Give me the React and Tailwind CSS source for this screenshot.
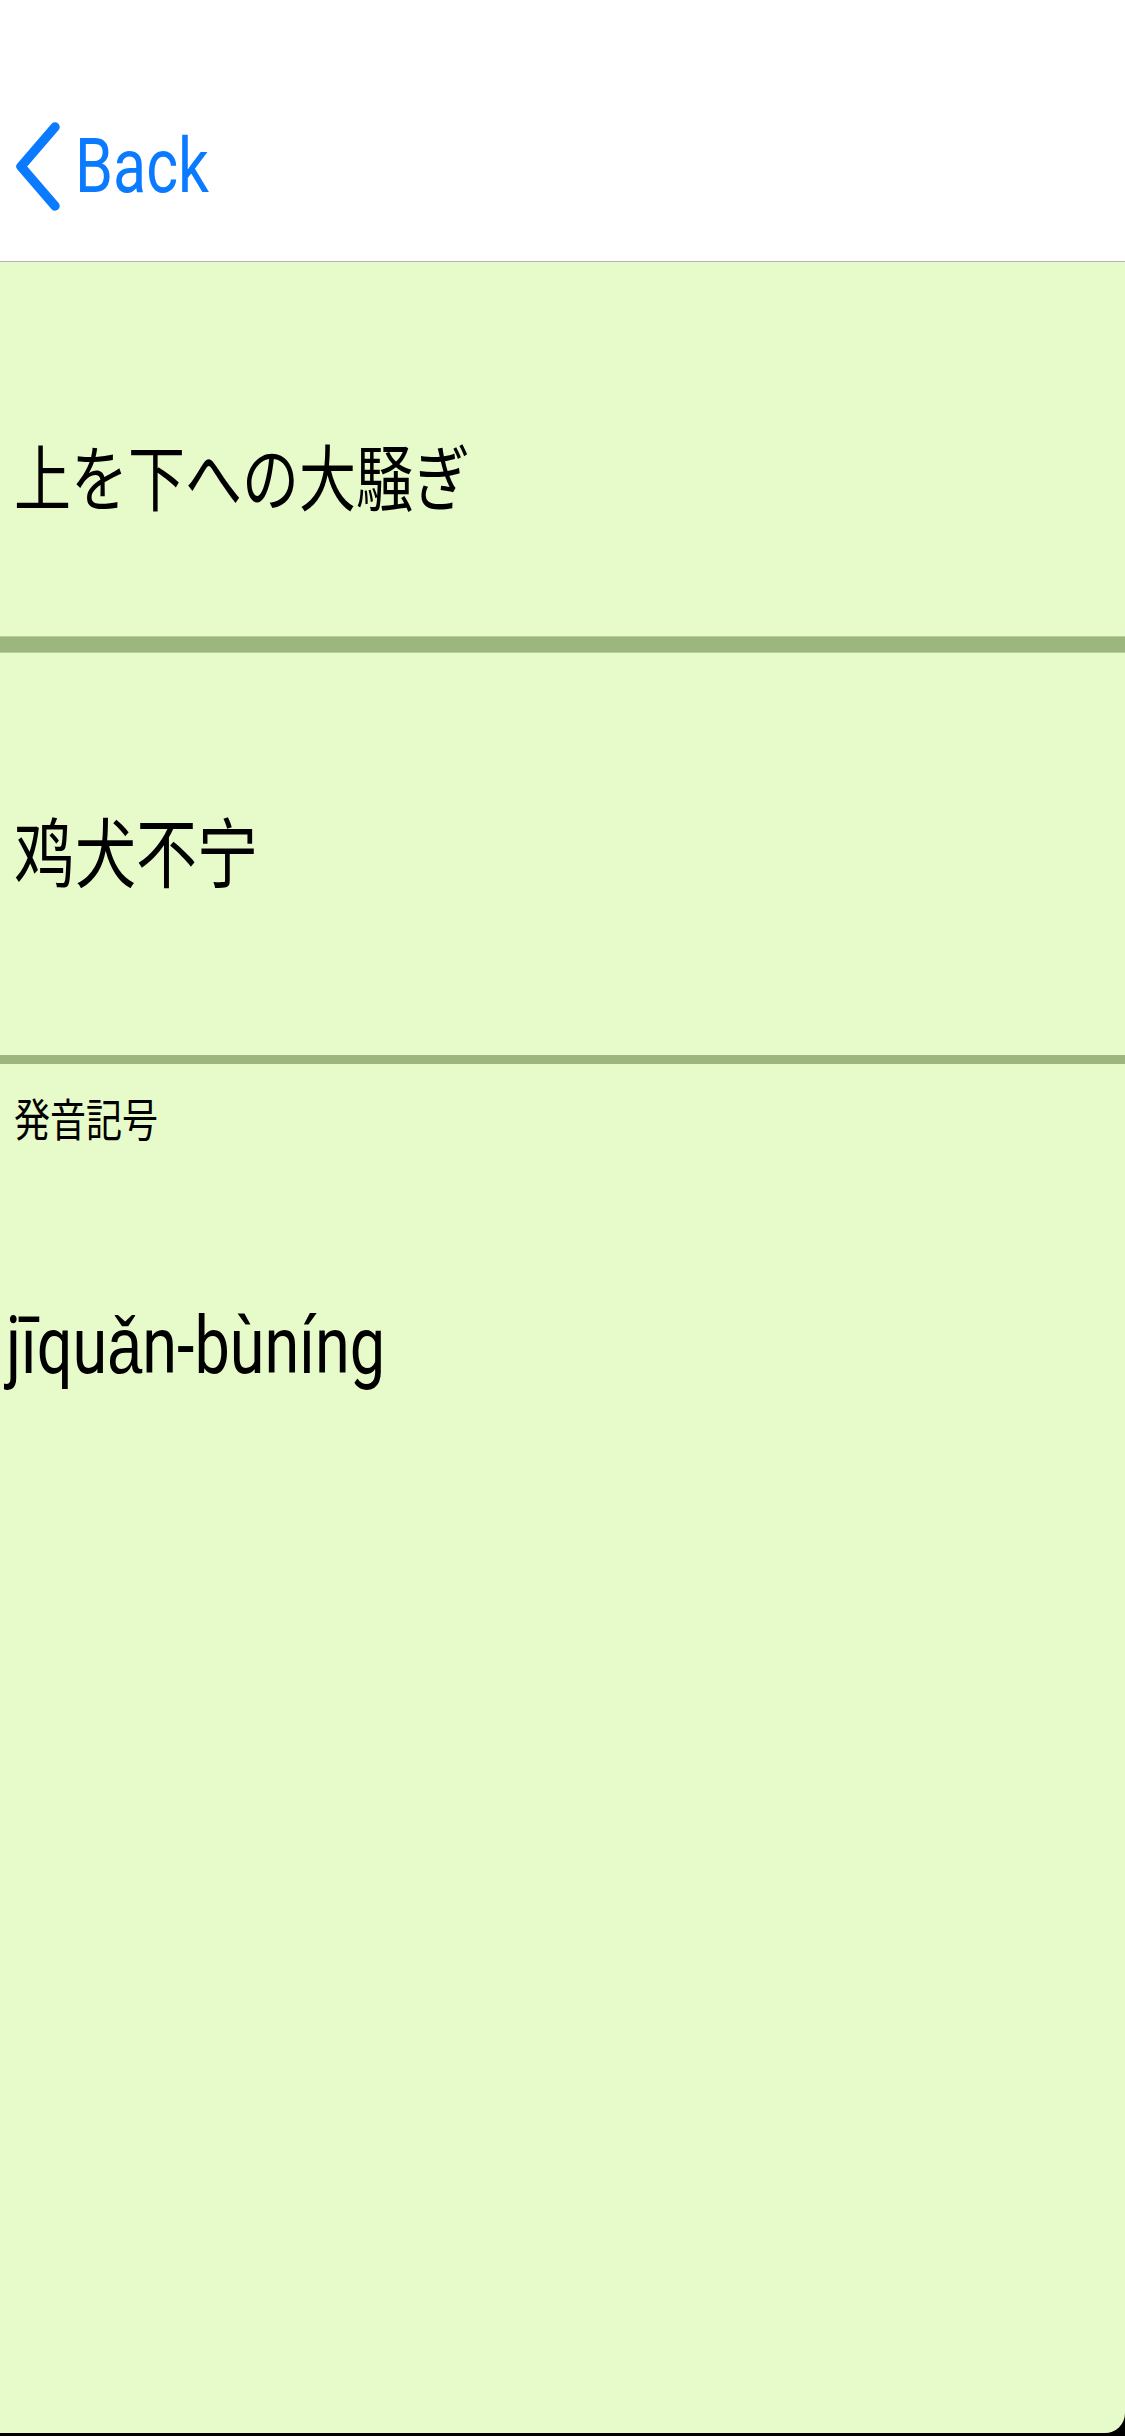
import React from 'react';

const jpFont = { fontFamily: '"Noto Sans CJK JP", "Noto Sans", sans-serif' };
const scFont = { fontFamily: '"Noto Sans CJK SC", "Noto Sans", sans-serif' };

function BackChevron() {
    return (
        <svg width="44" height="89" viewBox="0 0 44 89" fill="none" className="flex-shrink-0">
            <path d="M39 5 L5 44.5 L39 84" stroke="#0a7aff" strokeWidth="9.5" strokeLinecap="round" strokeLinejoin="round" />
        </svg>
    );
}

export default function App() {
    return (
        <div className="h-[2436px] w-[1125px] bg-black flex flex-col overflow-hidden">
            {/* Nav bar */}
            <div className="h-[262px] bg-white border-b border-[#b4b4b4] pt-[122px] flex-shrink-0">
                <div className="flex items-center h-[89px] pl-[16px] gap-[15px]">
                    <BackChevron />
                    <span className="inline-block scale-y-125 font-['Roboto',sans-serif] text-[61px] leading-none text-[#0a7aff]">
                        Back
                    </span>
                </div>
            </div>

            <div className="flex-1 bg-[#e7fbca] rounded-br-[20px] mb-[3px] flex flex-col">
                {/* Japanese */}
                <div className="h-[374px] flex items-center pl-[14px] pt-[50px]">
                    <span className="inline-block scale-y-125 text-[57px] leading-none text-black" style={jpFont}>
                        上を下への大騒ぎ
                    </span>
                </div>
                <div className="h-[17px] bg-[#9db67e] border-y border-[#b9d09a]"></div>

                {/* Chinese */}
                <div className="h-[402px] flex items-center pl-[14px] pb-[12px]">
                    <span className="inline-block scale-y-125 text-[61px] leading-none text-black" style={scFont}>
                        鸡犬不宁
                    </span>
                </div>
                <div className="h-[9px] bg-[#9db67e]"></div>

                {/* Pronunciation */}
                <div className="flex flex-col items-start pt-[35px]">
                    <span className="inline-block scale-y-125 pl-[14px] text-[36px] leading-none text-black" style={jpFont}>
                        発音記号
                    </span>
                    <span className="inline-block scale-y-125 mt-[180px] pl-[6px] font-['Roboto',sans-serif] text-[63px] leading-none text-black">
                        jīquǎn-bùníng
                    </span>
                </div>
            </div>
        </div>
    );
}
